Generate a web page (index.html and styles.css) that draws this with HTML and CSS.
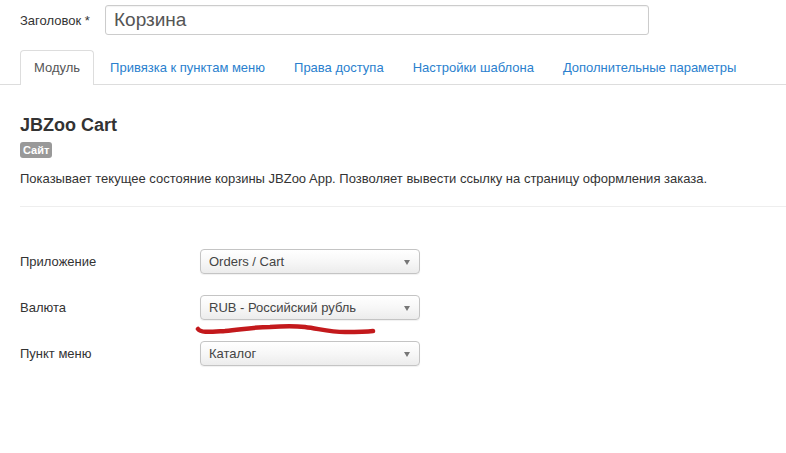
FILE: index.html
```html
<!DOCTYPE html>
<html lang="ru">
<head>
<meta charset="utf-8">
<title>JBZoo Cart</title>
<link rel="stylesheet" href="styles.css">
</head>
<body>
<div class="page">
  <div class="title-row">
    <label class="title-label">Заголовок *</label>
    <div class="title-input">Корзина</div>
  </div>

  <ul class="tabs">
    <li class="tab active">Модуль</li>
    <li class="tab">Привязка к пунктам меню</li>
    <li class="tab">Права доступа</li>
    <li class="tab">Настройки шаблона</li>
    <li class="tab">Дополнительные параметры</li>
  </ul>

  <div class="content">
    <h2 class="mod-title">JBZoo Cart</h2>
    <span class="badge">Сайт</span>
    <p class="desc">Показывает текущее состояние корзины JBZoo App. Позволяет вывести ссылку на страницу оформления заказа.</p>
    <div class="rule"></div>

    <div class="form">
      <div class="row">
        <span class="label">Приложение</span>
        <div class="select">Orders / Cart<span class="caret"></span></div>
      </div>
      <div class="row">
        <span class="label">Валюта</span>
        <div class="select marked">RUB - Российский рубль<span class="caret"></span>
          <svg class="scribble" width="190" height="20" viewBox="0 0 190 20">
            <path d="M3 9 C6 13 14 12 30 11 C50 9 60 7 75 7 C90 6 100 6 110 7 C125 9 135 12 150 12 C160 12 170 12 178 11" fill="none" stroke="#c3191c" stroke-width="4.5" stroke-linecap="round"/>
          </svg>
        </div>
      </div>
      <div class="row">
        <span class="label">Пункт меню</span>
        <div class="select">Каталог<span class="caret"></span></div>
      </div>
    </div>
  </div>
</div>
</body>
</html>
```

FILE: styles.css
```css
* { box-sizing: border-box; }
html, body {
  margin: 0;
  padding: 0;
  background: #fff;
}
body {
  font-family: "Liberation Sans", Arial, sans-serif;
  font-size: 13px;
  color: #333;
}
.page {
  width: 786px;
  height: 453px;
  overflow: hidden;
}
.title-row {
  display: flex;
  align-items: center;
  padding: 5px 0 0 20px;
}
.title-label {
  width: 85px;
  font-size: 13px;
  color: #333;
}
.title-input {
  width: 544px;
  height: 30px;
  border: 1px solid #ccc;
  border-radius: 3px;
  font-size: 19px;
  line-height: 28px;
  padding: 0 8px;
  color: #555;
  box-shadow: inset 0 1px 1px rgba(0,0,0,0.05);
}
.tabs {
  list-style: none;
  margin: 15px 0 0 0;
  padding: 0 0 0 20px;
  display: flex;
  border-bottom: 1px solid #ddd;
  height: 35px;
}
.tab {
  padding: 0 12px 0 13px;
  margin-right: 2px;
  line-height: 34px;
  color: #2a7fce;
  font-size: 13px;
  border: 1px solid transparent;
  border-bottom: none;
  border-radius: 4px 4px 0 0;
}
.tab.active {
  color: #555;
  border-color: #ddd;
  background: #fff;
  height: 35px;
  padding: 0 13px;
}
.content {
  padding: 0 0 0 20px;
}
.mod-title {
  margin: 29px 0 0 0;
  font-size: 18px;
  line-height: 22px;
  font-weight: bold;
  color: #333;
}
.badge {
  display: inline-block;
  margin-top: 6px;
  background: #999;
  color: #fff;
  font-size: 11px;
  font-weight: bold;
  line-height: 16px;
  padding: 0 3px;
  border-radius: 3px;
}
.desc {
  margin: 12px 0 0 0;
  line-height: 18px;
  font-size: 13px;
  color: #333;
}
.rule {
  margin-top: 18px;
  height: 1px;
  background: #eee;
}
.form {
  padding-top: 42px;
  display: flex;
  flex-direction: column;
  gap: 21px;
}
.row {
  display: flex;
  align-items: center;
  height: 25px;
}
.label {
  width: 180px;
  color: #333;
}
.select {
  position: relative;
  width: 220px;
  height: 25px;
  line-height: 23px;
  padding: 0 8px;
  border: 1px solid #c4c4c4;
  border-radius: 4px;
  background: linear-gradient(#ffffff 0%, #f7f7f7 50%, #ececec 100%);
  color: #444;
  box-shadow: 0 1px 1px rgba(0,0,0,0.06);
}
.caret {
  position: absolute;
  right: 9px;
  top: 10px;
  width: 0;
  height: 0;
  border-left: 3.5px solid transparent;
  border-right: 3.5px solid transparent;
  border-top: 5px solid #777;
}
.scribble {
  position: absolute;
  left: -6px;
  top: 24px;
}
```
